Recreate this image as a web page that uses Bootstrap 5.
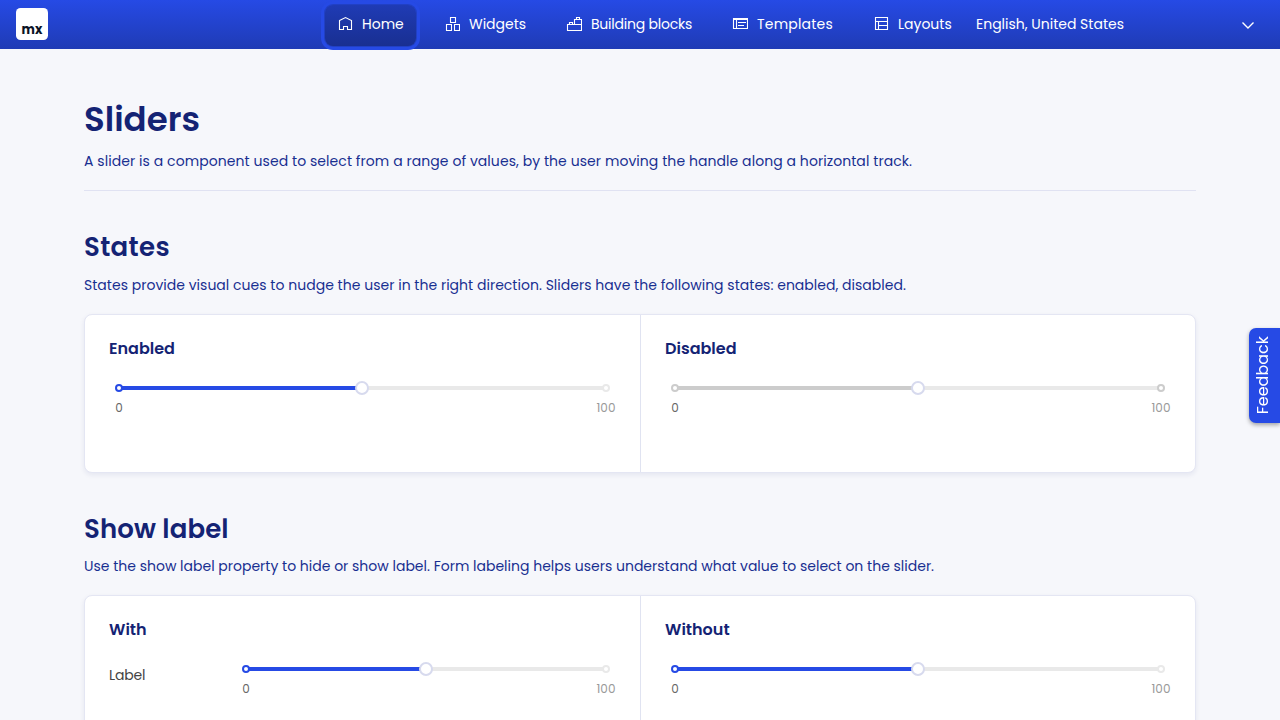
<!DOCTYPE html>
<html lang="en">
<head>
<meta charset="utf-8">
<meta name="viewport" content="width=device-width, initial-scale=1">
<title>Sliders</title>
<link href="https://cdn.jsdelivr.net/npm/bootstrap@5.3.0/dist/css/bootstrap.min.css" rel="stylesheet">
<style>
body{font-family:Poppins,Inter,sans-serif;font-size:14px;line-height:20px;background:#f6f7fb;color:#142374;height:720px;overflow:hidden}
.topbar{height:49px;background:linear-gradient(#264ae5,#1f3bb5);padding:0 0 1px 16px;color:#fff}
.logo{width:32px;height:32px;margin-right:277px}
.menu{gap:16px;margin-top:2px}
.menu a{height:41px;padding:0 12px 2px;color:#fff;text-decoration:none;border-radius:8px;white-space:nowrap}
.menu a.active{background:linear-gradient(#1f3bb5,#192f91);box-shadow:0 0 0 1px #2140c4,0 0 0 4px #264ae5}
.menu svg{width:16px;height:16px;margin-right:9px;fill:none;stroke:#fff;stroke-width:1.1;flex:none}
.t-home{width:42px}.t-widgets{width:57px}.t-blocks{width:101px;letter-spacing:-.22px}.t-templates{width:76px;letter-spacing:.2px}.t-layouts{width:54px}
.lang{margin-left:12px}
.content-wrap{width:1112px}
h1{font-size:34px;line-height:44px;font-weight:600;margin:48px 0 10px}
h2{font-size:26px;line-height:34px;font-weight:600;margin:0 0 10.6px}
h3{font-size:16px;line-height:22px;font-weight:600;margin:0}
.s1{letter-spacing:.35px}.s2{letter-spacing:.12px;padding-top:1px;margin-bottom:9.6px}
.intro{color:#192f91;margin:0;white-space:nowrap}
.p1{letter-spacing:.066px}.p2{letter-spacing:.02px}
.rule-line{border-bottom:1px solid #e0e2f2;padding-bottom:19px;margin-bottom:39.3px}
.panel{height:159px;background:#fff;border:1px solid #e4e6f3;border-radius:8px;box-shadow:0 2px 5px rgba(20,35,116,.08);margin-top:19px;margin-bottom:38.6px}
.panel>div{padding:23px 24px}
.panel>div:first-child{width:556px;border-right:1px solid #e0e3f1}
.field-name{width:127px;color:#444;padding-top:24px;letter-spacing:-.15px}
.slider{height:4px;margin:26px 10px 0;background:#e9e9e9;position:relative}
.slider .fill{height:4px;background:#264ae5}
.knob{position:absolute;top:-5px;width:14px;height:14px;margin-left:-7.4px;border:2px solid #d7daee;border-radius:50%;background:#fff}
.stop{position:absolute;top:-2px;width:8px;height:8px;margin-left:-4px;border:2px solid #e9e9e9;border-radius:50%;background:#fff}
.stop.on{border-color:#264ae5}
.off .fill{background:#ccc}
.off .stop{border-color:#ccc}
.tick{position:absolute;top:12px;width:40px;margin-left:-20px;text-align:center;font-size:12px;color:#999}
.tick.on{color:#666}
.feedback{right:0;top:328px;width:31px;height:95px;background:#264ae5;color:#fff;border-radius:7px 0 0 7px;box-shadow:0 2px 4px rgba(0,0,0,.35);font-size:16px}
.feedback span{writing-mode:vertical-rl;transform:rotate(180deg);margin-right:4px}
</style>
</head>
<body>
<nav class="topbar d-flex align-items-center">
  <svg class="logo" viewBox="0 0 32 32"><rect width="32" height="32" rx="4.5" fill="#fff"/><text x="5.6" y="25.800" font-family="Poppins,sans-serif" font-weight="700" font-size="13.5" textLength="20.8" lengthAdjust="spacingAndGlyphs" fill="#0a1326">mx</text></svg>
  <div class="menu d-flex">
    <a href="#" class="active d-flex align-items-center"><svg viewBox="0 0 16 16"><path d="M2.500 4.500 8.500 1.500l6 3v9h-4v-3h-4v3h-4z"/></svg><span class="t-home">Home</span></a>
    <a href="#" class="d-flex align-items-center"><svg viewBox="0 0 16 16"><path d="M6.500 1.500h5v5h-5zM2.500 8.500h5v6h-5zM10.500 8.500h5v6h-5z"/></svg><span class="t-widgets">Widgets</span></a>
    <a href="#" class="d-flex align-items-center"><svg viewBox="0 0 16 16"><path d="M1.500 8.500h14v6h-14zM8.500 8.500v-5h7v5M3.500 8.500v-2h3v2M10.500 3.500v-2h3v2"/></svg><span class="t-blocks">Building blocks</span></a>
    <a href="#" class="d-flex align-items-center"><svg viewBox="0 0 16 16"><path d="M1.500 2.500h14v10h-14zM1.500 3.500h14M4.500 4v8.500M6 6.500h8M6 9.500h6"/></svg><span class="t-templates">Templates</span></a>
    <a href="#" class="d-flex align-items-center"><svg viewBox="0 0 16 16"><path d="M2.500 1.500h12v12h-12zM2.500 5.500h12M5.500 5.500v8M5.500 9.500h9"/></svg><span class="t-layouts">Layouts</span></a>
  </div>
  <div class="lang d-flex align-items-center flex-grow-1"><span>English, United States</span><svg class="ms-auto me-4" width="16" height="16" viewBox="0 0 16 16" fill="none" stroke="#fff" stroke-width="1.4"><path d="m2.500 6.500 5.500 5.500L13.500 6.500"/></svg></div>
</nav>
<main class="content-wrap mx-auto">
  <header class="rule-line">
    <h1>Sliders</h1>
    <p class="intro p1">A slider is a component used to select from a range of values, by the user moving the handle along a horizontal track.</p>
  </header>
  <section>
    <h2 class="s1">States</h2>
    <p class="intro p2">States provide visual cues to nudge the user in the right direction. Sliders have the following states: enabled, disabled.</p>
    <div class="panel d-flex">
      <div><h3>Enabled</h3>
        <div class="slider"><div class="fill" style="width:50%"></div><i class="stop on" style="left:0"></i><i class="stop" style="left:100%"></i><i class="knob" style="left:50%"></i><span class="tick on" style="left:0">0</span><span class="tick" style="left:100%">100</span></div>
      </div>
      <div class="flex-grow-1"><h3>Disabled</h3>
        <div class="slider off"><div class="fill" style="width:50%"></div><i class="stop on" style="left:0"></i><i class="stop" style="left:100%"></i><i class="knob" style="left:50%"></i><span class="tick on" style="left:0">0</span><span class="tick" style="left:100%">100</span></div>
      </div>
    </div>
  </section>
  <section>
    <h2 class="s2">Show label</h2>
    <p class="intro">Use the show label property to hide or show label. Form labeling helps users understand what value to select on the slider.</p>
    <div class="panel d-flex">
      <div><h3>With</h3>
        <div class="d-flex align-items-start"><label class="field-name">Label</label>
        <div class="slider flex-grow-1"><div class="fill" style="width:50%"></div><i class="stop on" style="left:0"></i><i class="stop" style="left:100%"></i><i class="knob" style="left:50%"></i><span class="tick on" style="left:0">0</span><span class="tick" style="left:100%">100</span></div></div>
      </div>
      <div class="flex-grow-1"><h3>Without</h3>
        <div class="slider"><div class="fill" style="width:50%"></div><i class="stop on" style="left:0"></i><i class="stop" style="left:100%"></i><i class="knob" style="left:50%"></i><span class="tick on" style="left:0">0</span><span class="tick" style="left:100%">100</span></div>
      </div>
    </div>
  </section>
</main>
<div class="feedback position-fixed d-flex align-items-center justify-content-center"><span>Feedback</span></div>
<script src="https://cdn.jsdelivr.net/npm/bootstrap@5.3.0/dist/js/bootstrap.bundle.min.js"></script>
</body>
</html>
